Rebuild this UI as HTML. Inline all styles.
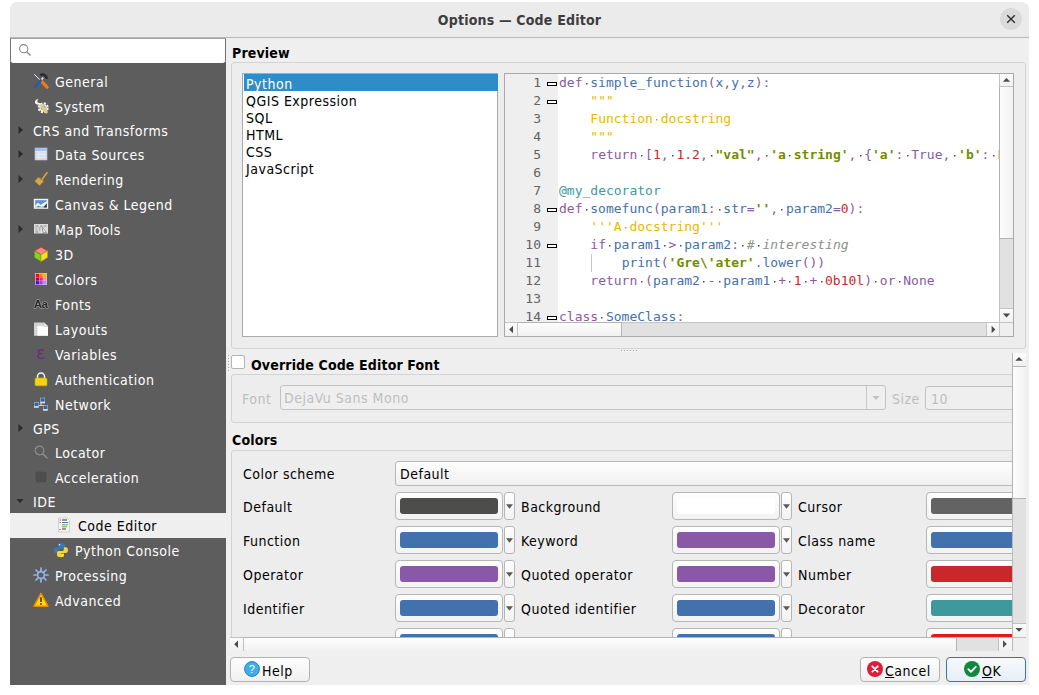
<!DOCTYPE html>
<html lang="en">
<head>
<meta charset="utf-8">
<title>Options — Code Editor</title>
<style>
*{box-sizing:border-box;margin:0;padding:0}
html,body{width:1039px;height:695px;overflow:hidden;background:#fff}
body{font-family:"DejaVu Sans Condensed","DejaVu Sans","Liberation Sans",sans-serif;font-size:14px;color:#000;letter-spacing:.5px;position:relative}
.abs,.win *{position:absolute}
.win{position:absolute;left:10px;top:2px;width:1019px;height:683px;background:#efefef;border-radius:8px 8px 0 0;overflow:hidden}
/* coordinates inside .win are page coords shifted by (-10,-2) */
.page{left:-10px;top:-2px;width:1039px;height:695px}
.titlebar{left:10px;top:2px;width:1019px;height:36px;background:#ebebeb;border-bottom:1px solid #b9b9b9}
.title{left:10px;top:3px;width:1019px;height:35px;line-height:35px;text-align:center;font-weight:bold;color:#3d3d3d;letter-spacing:.2px}
.close{left:1000px;top:8px;width:22px;height:22px;border-radius:50%;background:#dadada}
b,.b{font-weight:bold;letter-spacing:.15px}
.t{white-space:nowrap;line-height:16px;height:16px}
.side{left:10px;top:62px;width:216px;height:623px;background:#5d5d5d}
.search{left:10px;top:38px;width:216px;height:25px;background:#fff;border:1px solid #707070;border-top-color:#a3a3a3;border-bottom:0;border-radius:0 0 3px 3px}
.row{left:10px;width:216px;height:25px;line-height:25px;color:#fff;white-space:nowrap}
.row.sm{height:23px;line-height:23px}
.row span{top:1px}
u{position:static!important}
.row svg{top:4px}
.row.sel{background:#efefef;color:#000}
.gb{border:1px solid #d3d3d3;border-radius:3px;background:#ededed}
.frame{border:1px solid #a9a9a9;background:#fff}
.li{left:1px;width:254px;height:17px;line-height:20px;padding-left:2px;white-space:nowrap}
.code,.code *{font-family:"DejaVu Sans Mono","Liberation Mono",monospace;font-size:13px;letter-spacing:0}
.ln{left:0;width:36px;text-align:right;height:18px;line-height:18px;color:#636363}
.cl{left:54px;height:18px;line-height:18px;white-space:pre;color:#4d4d4c}
.cl span{position:static}
.fold{left:42px;width:10px;height:4px;border:1px solid #000;background:#fff}
.k{color:#8959a8}.f{color:#4271ae}.n{color:#c82829}.s{color:#718c00;font-weight:bold}.d{color:#eab700}.c{color:#8e908c;font-style:italic}.dc{color:#3e999f}.w{display:inline-block;width:1ch;height:18px;vertical-align:top;white-space:pre;background:linear-gradient(#4a4a4a,#4a4a4a) 3.300px 8.500px/1.500px 1.500px no-repeat}.wy{background-image:linear-gradient(#b89a30,#b89a30)}
.sbv{background:#e1e1e1;border-left:1px solid #c4c4c4}
.thumb{background:linear-gradient(90deg,#fdfdfd,#f1f1f1);border:1px solid #b4b4b4}
.thumbh{background:linear-gradient(180deg,#fdfdfd,#f1f1f1);border:1px solid #b4b4b4}
.sbb{background:linear-gradient(180deg,#fbfbfb,#f1f1f1)}
.sbbtn{background:linear-gradient(180deg,#fbfbfb,#f1f1f1);border:1px solid #c4c4c4}
.combo{border:1px solid #b6b6b6;border-radius:3px;background:linear-gradient(180deg,#fefefe,#f0f0f0)}
.cbtn{width:108px;height:28px;margin-top:-1px;border:1px solid #b6b6b6;border-radius:4px;background:linear-gradient(180deg,#fefefe,#f2f2f2)}
.cbtn i{left:4px;top:5px;width:98px;height:16px;border-radius:3px}
.marr{width:11px;height:28px;margin-top:-1px;border:1px solid #b6b6b6;border-radius:3px;background:linear-gradient(180deg,#fefefe,#f2f2f2)}
.marr svg{left:1px;top:11px}
.btn{height:25px;border:1px solid #b2b2b2;border-radius:4px;background:linear-gradient(180deg,#fefefe,#f0f0f0)}
.dis{color:#bebebe}
.dot{width:1px;height:1px;background:#a8a8a8;box-shadow:1px 1px 0 #fff}
</style>
</head>
<body>
<div class="win"><div class="page">

<!-- title bar -->
<div class="titlebar"></div>
<div class="title">Options — Code Editor</div>
<div class="close"><svg width="22" height="22" viewBox="0 0 22 22" style="left:0;top:0"><path d="M7.2 7.2l7.6 7.6M14.8 7.2l-7.6 7.6" stroke="#2e2e2e" stroke-width="1.4" fill="none"/></svg></div>

<!-- sidebar -->
<div class="side"></div>
<div class="search"><svg width="16" height="16" viewBox="0 0 16 16" style="left:6px;top:3px"><circle cx="6.700" cy="6.700" r="4.100" fill="none" stroke="#868686" stroke-width="1.100"/><path d="M9.800 9.800l3.700 3.700" stroke="#868686" stroke-width="1.400"/></svg></div>


<div class="row" style="top:69px"><svg width="16" height="16" viewBox="0 0 16 16" style="left:23px;top:4px"><path d="M1.300 1.300L7.800 7.600" stroke="#ececec" stroke-width="1"/><path d="M8.400 8.200l5.600 6" stroke="#ef7a16" stroke-width="3.200" stroke-linecap="round"/><path d="M7.200 2.400C9.400.6 13 1.600 14 5.800" fill="none" stroke="#2a2a2a" stroke-width="2.600"/><path d="M10.200 4.600L8.400 6.800" stroke="#e4e4e4" stroke-width="1.800"/><path d="M7.600 7.600L2.400 13.600" stroke="#2d5c9c" stroke-width="2.800" stroke-linecap="round"/></svg><span style="left:45px">General</span></div>
<div class="row" style="top:94px"><svg width="16" height="16" viewBox="0 0 16 16" style="left:23px;top:4px"><path d="M5.600 1.600A2.600 2.600 0 1 0 6.900 5.200L4.600 4.600 4.300 2.800z" fill="#f6f6f6"/><path d="M5.800 5.200l2.400 2.600" stroke="#f6f6f6" stroke-width="1.600"/><circle cx="10.200" cy="9.800" r="4.500" fill="none" stroke="#f4f4f4" stroke-width="2" stroke-dasharray="2.200 1.330"/><circle cx="10.200" cy="9.800" r="3.600" fill="#f4f4f4"/><circle cx="10.200" cy="9.800" r="2.500" fill="#7ea4d6"/><path d="M8.200 7.600l5.200 6.400" stroke="#e9d474" stroke-width="2.800" stroke-linecap="round"/><path d="M8.200 7.600l5.200 6.400" stroke="#c9b450" stroke-width=".5"/></svg><span style="left:45px">System</span></div>
<div class="row sm" style="top:119px"><svg width="8" height="10" viewBox="0 0 8 10" style="left:7px;top:6px"><path d="M1.500 1l4.500 4-4.500 4z" fill="#2b2b2b"/></svg><span style="left:23px">CRS and Transforms</span></div>
<div class="row" style="top:142px"><svg width="8" height="10" viewBox="0 0 8 10" style="left:7px;top:7px"><path d="M1.500 1l4.500 4-4.500 4z" fill="#2b2b2b"/></svg><svg width="16" height="16" viewBox="0 0 16 16" style="left:23px;top:4px"><rect x="2" y="2" width="12" height="12" fill="#d5dce8"/><rect x="2" y="2" width="12" height="3.400" fill="#9fc3ee"/><path d="M2 5.700h12M2 8.500h12M2 11.300h12M6 5.400v8.600" stroke="#eef2f8" stroke-width=".8"/><rect x="2" y="2" width="12" height="12" fill="none" stroke="#b9c6da" stroke-width=".6"/></svg><span style="left:45px">Data Sources</span></div>
<div class="row" style="top:167px"><svg width="8" height="10" viewBox="0 0 8 10" style="left:7px;top:7px"><path d="M1.500 1l4.500 4-4.500 4z" fill="#2b2b2b"/></svg><svg width="16" height="16" viewBox="0 0 16 16" style="left:23px;top:4px"><path d="M14 1.800L9.300 8" stroke="#dba33a" stroke-width="1.700" stroke-linecap="round"/><path d="M5.300 6.200l5.400 4-4.100 4.300-4.800-4.300z" fill="#d9a648" stroke="#b98225" stroke-width=".7"/></svg><span style="left:45px">Rendering</span></div>
<div class="row" style="top:192px"><svg width="16" height="16" viewBox="0 0 16 16" style="left:23px;top:4px"><rect x=".8" y="2.800" width="14.400" height="10" fill="#f4f4f4"/><rect x="2.200" y="4.200" width="11.600" height="7.200" fill="#5a93d2"/><path d="M2.200 9.500l2.800-3 2.600 2.400 2.400-1.600 3.800-2.300v3l-3 2.400-3 .4-2.400-1.400-3.200 2z" fill="#f4f6fa"/><path d="M13.800 7.200l-3.400 4.200h3.400z" fill="#3a3a3a"/></svg><span style="left:45px">Canvas &amp; Legend</span></div>
<div class="row" style="top:217px"><svg width="8" height="10" viewBox="0 0 8 10" style="left:7px;top:7px"><path d="M1.500 1l4.500 4-4.500 4z" fill="#2b2b2b"/></svg><svg width="16" height="16" viewBox="0 0 16 16" style="left:23px;top:4px"><rect x="1" y="3" width="14" height="9.500" fill="#dedede"/><path d="M2.500 5h3M7 5h2M10.500 5h3M2.500 7h1.500M5.500 7h2M2.500 9h2M6 9h1.500M2.500 11h3" stroke="#8c8c8c" stroke-width="1"/><path d="M9 5.500l4.500 6-2-.3-1 1.800z" fill="#f8f8f8" stroke="#666" stroke-width=".6"/></svg><span style="left:45px">Map Tools</span></div>
<div class="row" style="top:242px"><svg width="16" height="16" viewBox="0 0 16 16" style="left:23px;top:4px"><path d="M8 1l6.500 3.800L8 8.800 1.500 4.800z" fill="#f28a8a" stroke="#c23030" stroke-width=".8"/><path d="M1.500 4.800L8 8.800v6.700L1.500 11.500z" fill="#86d21e" stroke="#5c9a14" stroke-width=".8"/><path d="M14.500 4.800L8 8.800v6.700l6.500-4z" fill="#f6e02c" stroke="#b8a018" stroke-width=".8"/></svg><span style="left:45px">3D</span></div>
<div class="row" style="top:267px"><svg width="16" height="16" viewBox="0 0 16 16" style="left:23px;top:4px"><rect x="2" y="2" width="12" height="12" fill="#cfcfcf"/><rect x="2.700" y="2.700" width="3.300" height="3.300" fill="#ff0a0a"/><rect x="6.400" y="2.700" width="3.300" height="3.300" fill="#ff7e00"/><rect x="10.100" y="2.700" width="3.300" height="3.300" fill="#ffb400"/><rect x="2.700" y="6.400" width="3.300" height="3.300" fill="#b4003c"/><rect x="6.400" y="6.400" width="3.300" height="3.300" fill="#e61e9c"/><rect x="10.100" y="6.400" width="3.300" height="3.300" fill="#ff82c3"/><rect x="2.700" y="10.100" width="3.300" height="3.300" fill="#5a00ff"/><rect x="6.400" y="10.100" width="3.300" height="3.300" fill="#9440ff"/><rect x="10.100" y="10.100" width="3.300" height="3.300" fill="#b488ff"/></svg><span style="left:45px">Colors</span></div>
<div class="row" style="top:292px"><svg width="16" height="16" viewBox="0 0 16 16" style="left:23px;top:4px"><text x=".8" y="12.300" font-family="Liberation Sans,sans-serif" font-size="11.500" font-weight="bold" fill="#2a2a2a" stroke="#b4b4b4" stroke-width=".9" paint-order="stroke" letter-spacing="-.6">Aa</text></svg><span style="left:45px">Fonts</span></div>
<div class="row" style="top:317px"><svg width="16" height="16" viewBox="0 0 16 16" style="left:23px;top:4px"><path d="M1 1.500h10l4 4v9.200H1z" fill="#cfcfcf"/><path d="M4.300 4.800h10.700v9.900H4.300z" fill="#fdfdfd"/><path d="M11 1.500v4h4z" fill="#f6f6f6" stroke="#b8b8b8" stroke-width=".5"/><path d="M2.600 5.500v1M2.600 8v1M2.600 10.500v1M2.600 13v1M5 3h1M7.500 3h1" stroke="#f0f0f0" stroke-width=".9"/></svg><span style="left:45px">Layouts</span></div>
<div class="row" style="top:342px"><svg width="16" height="16" viewBox="0 0 16 16" style="left:23px;top:4px"><text x="3.200" y="13.200" font-family="DejaVu Sans,sans-serif" font-size="17" fill="#6d2c80">ε</text></svg><span style="left:45px">Variables</span></div>
<div class="row" style="top:367px"><svg width="16" height="16" viewBox="0 0 16 16" style="left:23px;top:4px"><path d="M4.500 7.500V5.500a3.500 3.500 0 0 1 7 0v2" fill="none" stroke="#f4f4f4" stroke-width="1.500"/><rect x="2" y="7" width="12" height="7.800" rx="1.200" fill="#f2d50c" stroke="#c9ae08" stroke-width=".6"/></svg><span style="left:45px">Authentication</span></div>
<div class="row" style="top:392px"><svg width="16" height="16" viewBox="0 0 16 16" style="left:23px;top:4px"><path d="M3.500 9.500h4.500v-3M8 9.500h3.500v2" stroke="#cfcfcf" stroke-width="1" fill="none"/><rect x="7.200" y="1.800" width="4.800" height="5.600" fill="#d8d8d8"/><rect x="7.600" y="2.200" width="4" height="3.400" fill="#2c64b4"/><rect x="1" y="6.200" width="4.800" height="5.600" fill="#d8d8d8"/><rect x="1.400" y="6.600" width="4" height="3.400" fill="#2c64b4"/><rect x="10" y="9.200" width="4.800" height="5.600" fill="#d8d8d8"/><rect x="10.400" y="9.600" width="4" height="3.400" fill="#2c64b4"/></svg><span style="left:45px">Network</span></div>
<div class="row sm" style="top:417px"><svg width="8" height="10" viewBox="0 0 8 10" style="left:7px;top:6px"><path d="M1.500 1l4.500 4-4.500 4z" fill="#2b2b2b"/></svg><span style="left:23px">GPS</span></div>
<div class="row" style="top:440px"><svg width="16" height="16" viewBox="0 0 16 16" style="left:23px;top:4px"><circle cx="6.500" cy="6.500" r="4.300" fill="none" stroke="#8e8e8e" stroke-width="1.200"/><path d="M9.700 9.700l4.300 4.300" stroke="#8e8e8e" stroke-width="1.500" stroke-linecap="round"/></svg><span style="left:45px">Locator</span></div>
<div class="row" style="top:465px"><svg width="16" height="16" viewBox="0 0 16 16" style="left:23px;top:4px"><rect x="3" y="3" width="10" height="10" fill="#4b4b4b"/><path d="M4.500 2v12M6.500 2v12M8.500 2v12M10.500 2v12M2 4.500h12M2 6.500h12M2 8.500h12M2 10.500h12" stroke="#4f4f4f" stroke-width=".9"/></svg><span style="left:45px">Acceleration</span></div>
<div class="row sm" style="top:490px"><svg width="10" height="8" viewBox="0 0 10 8" style="left:5px;top:7px"><path d="M1.500 2h7l-3.500 4.200z" fill="#2b2b2b"/></svg><span style="left:23px">IDE</span></div>
<div class="row sel" style="top:513px"><svg width="16" height="16" viewBox="0 0 16 16" style="left:46px;top:4px"><path d="M2.500 1h8.500l2.500 2.500v11.500h-11z" fill="#f4f4f4" stroke="#c4c4c4" stroke-width=".7"/><path d="M3.500 3h1.300M3.500 5.500h1.300M3.500 12.500h1.300" stroke="#d8402a" stroke-width="1"/><path d="M6 3h5" stroke="#3c3c3c" stroke-width="1"/><path d="M6 5.500h6" stroke="#4a7cc0" stroke-width="1"/><path d="M6 7.800h6M6 9.800h5" stroke="#6ab04a" stroke-width="1"/><path d="M6 12h4" stroke="#3c3c3c" stroke-width="1"/></svg><span style="left:68px">Code Editor</span></div>
<div class="row" style="top:538px"><svg width="16" height="16" viewBox="0 0 16 16" style="left:43px;top:4px"><path d="M7.800 1C5.600 1 5 2 5 3v1.700h3.200v.6H3.300C2 5.300 1 6.300 1 8.200s1 2.900 2.200 2.900H5V9.300C5 8 6 7.200 7.200 7.200h3.100c1 0 1.700-.8 1.700-1.700V3c0-1.200-1.300-2-4.200-2z" fill="#3b78b4"/><path d="M8.200 15.300c2.200 0 2.800-1 2.800-2v-1.700H7.800V11h4.900c1.300 0 2.300-1 2.300-2.900s-1-2.900-2.200-2.900H11V7c0 1.300-1 2.100-2.200 2.100H5.700C4.700 9.100 4 9.900 4 10.800v2.500c0 1.200 1.300 2 4.200 2z" fill="#fcd13e"/><circle cx="6.500" cy="2.700" r=".7" fill="#fff"/><circle cx="9.500" cy="13.600" r=".7" fill="#fff"/></svg><span style="left:65px">Python Console</span></div>
<div class="row" style="top:563px"><svg width="16" height="16" viewBox="0 0 16 16" style="left:23px;top:4px"><g stroke="#8fb6ea" stroke-width="1.700" stroke-linecap="round"><path d="M8 1v14M1 8h14M3 3l10 10M13 3L3 13"/></g><circle cx="8" cy="8" r="3.400" fill="#5d5d5d" stroke="#8fb6ea" stroke-width="1.600"/></svg><span style="left:45px">Processing</span></div>
<div class="row" style="top:588px"><svg width="16" height="16" viewBox="0 0 16 16" style="left:23px;top:4px"><path d="M8 1.300l7 12.900H1z" fill="#ffd91a" stroke="#f28a00" stroke-width="1.500" stroke-linejoin="round"/><path d="M8 5.300v4.700" stroke="#7a2a00" stroke-width="1.700"/><circle cx="8" cy="12" r=".95" fill="#7a2a00"/></svg><span style="left:45px">Advanced</span></div>


<div class="t b" style="left:232px;top:45px">Preview</div>
<div class="gb" style="left:231px;top:62px;width:795px;height:287px"></div>
<div class="frame" style="left:242px;top:73px;width:256px;height:264px">
<div class="li" style="top:0;background:#308cc6;color:#fff">Python</div>
<div class="li" style="top:17px">QGIS Expression</div>
<div class="li" style="top:34px">SQL</div>
<div class="li" style="top:51px">HTML</div>
<div class="li" style="top:68px">CSS</div>
<div class="li" style="top:85px">JavaScript</div>
</div>
<div class="frame code" style="left:504px;top:73px;width:510px;height:264px;overflow:hidden">
<div style="left:0;top:0;width:53px;height:248px;background:#efefef"></div>
<div style="left:0;top:0;width:494px;height:248px;overflow:hidden">
<div style="left:86px;top:180px;width:1px;height:18px;background:#c8c8c8"></div>
<div class="ln" style="top:0px">1</div>
<div class="fold" style="top:8px"></div>
<div class="cl" style="top:0px"><span class="k">def</span><span class="w"> </span><span class="f">simple_function</span><span class="k">(</span><span class="f">x</span><span class="k">,</span><span class="f">y</span><span class="k">,</span><span class="f">z</span><span class="k">):</span></div>
<div class="ln" style="top:18px">2</div>
<div class="fold" style="top:26px"></div>
<div class="cl" style="top:18px">    <span class="d">"""</span></div>
<div class="ln" style="top:36px">3</div>
<div class="cl" style="top:36px">    <span class="d">Function<span class="w wy"> </span>docstring</span></div>
<div class="ln" style="top:54px">4</div>
<div class="cl" style="top:54px">    <span class="d">"""</span></div>
<div class="ln" style="top:72px">5</div>
<div class="cl" style="top:72px">    <span class="k">return</span><span class="w"> </span><span class="k">[</span><span class="n">1</span><span class="k">,</span><span class="w"> </span><span class="n">1.2</span><span class="k">,</span><span class="w"> </span><span class="s">"val"</span><span class="k">,</span><span class="w"> </span><span class="s">'a</span><span class="w"> </span><span class="s">string'</span><span class="k">,</span><span class="w"> </span><span class="k">{</span><span class="s">'a'</span><span class="k">:</span><span class="w"> </span><span class="k">True,</span><span class="w"> </span><span class="s">'b'</span><span class="k">:</span><span class="w"> </span><span class="k">False}]</span></div>
<div class="ln" style="top:90px">6</div>
<div class="cl" style="top:90px"></div>
<div class="ln" style="top:108px">7</div>
<div class="cl" style="top:108px"><span class="dc">@my_decorator</span></div>
<div class="ln" style="top:126px">8</div>
<div class="fold" style="top:134px"></div>
<div class="cl" style="top:126px"><span class="k">def</span><span class="w"> </span><span class="f">somefunc</span><span class="k">(</span><span class="f">param1</span><span class="k">:</span><span class="w"> </span><span class="f">str</span><span class="k">=</span><span class="s">''</span><span class="k">,</span><span class="w"> </span><span class="f">param2</span><span class="k">=</span><span class="n">0</span><span class="k">):</span></div>
<div class="ln" style="top:144px">9</div>
<div class="cl" style="top:144px">    <span class="d">'''A<span class="w wy"> </span>docstring'''</span></div>
<div class="ln" style="top:162px">10</div>
<div class="fold" style="top:170px"></div>
<div class="cl" style="top:162px">    <span class="k">if</span><span class="w"> </span><span class="f">param1</span><span class="w"> </span><span class="k">&gt;</span><span class="w"> </span><span class="f">param2</span><span class="k">:</span><span class="w"> </span><span class="c">#</span><span class="w"> </span><span class="c">interesting</span></div>
<div class="ln" style="top:180px">11</div>
<div class="cl" style="top:180px">        <span class="f">print</span><span class="k">(</span><span class="s">'Gre\'ater'</span><span class="k">.</span><span class="f">lower</span><span class="k">())</span></div>
<div class="ln" style="top:198px">12</div>
<div class="cl" style="top:198px">    <span class="k">return</span><span class="w"> </span><span class="k">(</span><span class="f">param2</span><span class="w"> </span><span class="k">-</span><span class="w"> </span><span class="f">param1</span><span class="w"> </span><span class="k">+</span><span class="w"> </span><span class="n">1</span><span class="w"> </span><span class="k">+</span><span class="w"> </span><span class="n">0b10l</span><span class="k">)</span><span class="w"> </span><span class="k">or</span><span class="w"> </span><span class="k">None</span></div>
<div class="ln" style="top:216px">13</div>
<div class="cl" style="top:216px"></div>
<div class="ln" style="top:234px">14</div>
<div class="fold" style="top:242px"></div>
<div class="cl" style="top:234px"><span class="k">class</span><span class="w"> </span><span class="f">SomeClass</span><span class="k">:</span></div>
</div>
<!-- vertical scrollbar -->
<div class="sbv" style="left:494px;top:0;width:14px;height:248px"></div>
<div class="thumb" style="left:494px;top:12px;width:15px;height:153px"></div>
<div class="sbbtn" style="left:494px;top:-1px;width:15px;height:14px"><svg width="13" height="12" viewBox="0 0 13 12" style="left:0;top:0"><path d="M2.800 7.800l3.700-3.800 3.700 3.800z" fill="#4a4a4a"/></svg></div>
<div class="sbbtn" style="left:494px;top:234px;width:15px;height:15px"><svg width="13" height="13" viewBox="0 0 13 13" style="left:0;top:0"><path d="M2.800 4.600l3.700 3.800 3.700-3.800z" fill="#4a4a4a"/></svg></div>
<!-- horizontal scrollbar -->
<div style="left:0;top:248px;width:494px;height:14px;background:#e1e1e1;border-top:1px solid #c4c4c4"></div>
<div class="thumbh" style="left:12px;top:248px;width:105px;height:15px"></div>
<div class="sbbtn" style="left:-1px;top:248px;width:14px;height:15px"><svg width="12" height="13" viewBox="0 0 12 13" style="left:0;top:0"><path d="M8 2.800l-3.800 3.700 3.800 3.700z" fill="#4a4a4a"/></svg></div>
<div class="sbbtn" style="left:481px;top:248px;width:14px;height:15px"><svg width="12" height="13" viewBox="0 0 12 13" style="left:0;top:0"><path d="M4.600 2.800l3.800 3.700-3.800 3.700z" fill="#4a4a4a"/></svg></div>
<div style="left:494px;top:248px;width:15px;height:15px;background:#efefef;border:1px solid #c4c4c4"></div>
</div>



<div class="dot" style="left:621px;top:350px"></div><div class="dot" style="left:624px;top:350px"></div><div class="dot" style="left:627px;top:350px"></div><div class="dot" style="left:630px;top:350px"></div><div class="dot" style="left:633px;top:350px"></div><div class="dot" style="left:636px;top:350px"></div><div class="dot" style="left:228px;top:355px"></div><div class="dot" style="left:228px;top:358px"></div><div class="dot" style="left:228px;top:361px"></div><div class="dot" style="left:228px;top:364px"></div><div class="dot" style="left:228px;top:367px"></div><div class="dot" style="left:228px;top:370px"></div>
<!-- scroll area viewport: x 230..1012, y 353..637 -->
<div style="left:230px;top:350px;width:782px;height:287px;overflow:hidden"><div style="left:-230px;top:-350px;width:1039px;height:695px">
<div style="left:231px;top:355px;width:14px;height:14px;background:#fff;border:1px solid #b4b4b4;border-radius:2px"></div>
<div class="t b" style="left:251px;top:357px">Override Code Editor Font</div>
<div class="gb" style="left:231px;top:374px;width:900px;height:49px"></div>
<div class="t dis" style="left:242px;top:391px">Font</div>
<div class="combo" style="left:280px;top:385px;width:606px;height:25px;background:#efefef;border-color:#c2c2c2"></div>
<div style="left:866px;top:386px;width:1px;height:23px;background:#c9c9c9"></div>
<svg width="10" height="6" viewBox="0 0 10 6" style="left:871px;top:395px"><path d="M1.500 1h7l-3.500 4z" fill="#c0c0c0"/></svg>
<div class="t dis" style="left:284px;top:390px">DejaVu Sans Mono</div>
<div class="t dis" style="left:892px;top:391px">Size</div>
<div class="combo" style="left:925px;top:386px;width:120px;height:24px;background:#efefef;border-color:#c2c2c2"></div>
<div class="t dis" style="left:931px;top:391px">10</div>
<div class="t b" style="left:232px;top:432px">Colors</div>
<div class="gb" style="left:231px;top:450px;width:900px;height:300px"></div>
<div class="t" style="left:243px;top:466px">Color scheme</div>
<div class="combo" style="left:395px;top:461px;width:700px;height:25px"></div>
<div class="t" style="left:400px;top:466px">Default</div>
<div class="t" style="left:243px;top:499px">Default</div>
<div class="cbtn" style="left:395px;top:493px"><i style="background:#4d4d4c"></i></div>
<div class="marr" style="left:504px;top:493px"><svg width="7" height="5" viewBox="0 0 7 5"><path d="M0 .3h7l-3.500 4.400z" fill="#595959"/></svg></div>
<div class="t" style="left:521px;top:499px">Background</div>
<div class="cbtn" style="left:672px;top:493px"><i style="background:#ffffff"></i></div>
<div class="marr" style="left:781px;top:493px"><svg width="7" height="5" viewBox="0 0 7 5"><path d="M0 .3h7l-3.500 4.400z" fill="#595959"/></svg></div>
<div class="t" style="left:798px;top:499px">Cursor</div>
<div class="cbtn" style="left:926px;top:493px"><i style="background:#636363"></i></div>
<div class="marr" style="left:1035px;top:493px"><svg width="7" height="5" viewBox="0 0 7 5"><path d="M0 .3h7l-3.500 4.400z" fill="#595959"/></svg></div>
<div class="t" style="left:243px;top:533px">Function</div>
<div class="cbtn" style="left:395px;top:527px"><i style="background:#4271ae"></i></div>
<div class="marr" style="left:504px;top:527px"><svg width="7" height="5" viewBox="0 0 7 5"><path d="M0 .3h7l-3.500 4.400z" fill="#595959"/></svg></div>
<div class="t" style="left:521px;top:533px">Keyword</div>
<div class="cbtn" style="left:672px;top:527px"><i style="background:#8959a8"></i></div>
<div class="marr" style="left:781px;top:527px"><svg width="7" height="5" viewBox="0 0 7 5"><path d="M0 .3h7l-3.500 4.400z" fill="#595959"/></svg></div>
<div class="t" style="left:798px;top:533px">Class name</div>
<div class="cbtn" style="left:926px;top:527px"><i style="background:#4271ae"></i></div>
<div class="marr" style="left:1035px;top:527px"><svg width="7" height="5" viewBox="0 0 7 5"><path d="M0 .3h7l-3.500 4.400z" fill="#595959"/></svg></div>
<div class="t" style="left:243px;top:567px">Operator</div>
<div class="cbtn" style="left:395px;top:561px"><i style="background:#8959a8"></i></div>
<div class="marr" style="left:504px;top:561px"><svg width="7" height="5" viewBox="0 0 7 5"><path d="M0 .3h7l-3.500 4.400z" fill="#595959"/></svg></div>
<div class="t" style="left:521px;top:567px">Quoted operator</div>
<div class="cbtn" style="left:672px;top:561px"><i style="background:#8959a8"></i></div>
<div class="marr" style="left:781px;top:561px"><svg width="7" height="5" viewBox="0 0 7 5"><path d="M0 .3h7l-3.500 4.400z" fill="#595959"/></svg></div>
<div class="t" style="left:798px;top:567px">Number</div>
<div class="cbtn" style="left:926px;top:561px"><i style="background:#c82829"></i></div>
<div class="marr" style="left:1035px;top:561px"><svg width="7" height="5" viewBox="0 0 7 5"><path d="M0 .3h7l-3.500 4.400z" fill="#595959"/></svg></div>
<div class="t" style="left:243px;top:601px">Identifier</div>
<div class="cbtn" style="left:395px;top:595px"><i style="background:#4271ae"></i></div>
<div class="marr" style="left:504px;top:595px"><svg width="7" height="5" viewBox="0 0 7 5"><path d="M0 .3h7l-3.500 4.400z" fill="#595959"/></svg></div>
<div class="t" style="left:521px;top:601px">Quoted identifier</div>
<div class="cbtn" style="left:672px;top:595px"><i style="background:#4271ae"></i></div>
<div class="marr" style="left:781px;top:595px"><svg width="7" height="5" viewBox="0 0 7 5"><path d="M0 .3h7l-3.500 4.400z" fill="#595959"/></svg></div>
<div class="t" style="left:798px;top:601px">Decorator</div>
<div class="cbtn" style="left:926px;top:595px"><i style="background:#3e999f"></i></div>
<div class="marr" style="left:1035px;top:595px"><svg width="7" height="5" viewBox="0 0 7 5"><path d="M0 .3h7l-3.500 4.400z" fill="#595959"/></svg></div>
<div class="t" style="left:243px;top:635px">Comment</div>
<div class="cbtn" style="left:395px;top:629px"><i style="background:#4271ae"></i></div>
<div class="marr" style="left:504px;top:629px"><svg width="7" height="5" viewBox="0 0 7 5"><path d="M0 .3h7l-3.500 4.400z" fill="#595959"/></svg></div>
<div class="t" style="left:521px;top:635px">Tag</div>
<div class="cbtn" style="left:672px;top:629px"><i style="background:#4271ae"></i></div>
<div class="marr" style="left:781px;top:629px"><svg width="7" height="5" viewBox="0 0 7 5"><path d="M0 .3h7l-3.500 4.400z" fill="#595959"/></svg></div>
<div class="t" style="left:798px;top:635px">Error</div>
<div class="cbtn" style="left:926px;top:629px"><i style="background:#e31a1c"></i></div>
<div class="marr" style="left:1035px;top:629px"><svg width="7" height="5" viewBox="0 0 7 5"><path d="M0 .3h7l-3.500 4.400z" fill="#595959"/></svg></div>
</div></div>
<!-- vertical scrollbar of scroll area -->
<div class="sbv" style="left:1012px;top:353px;width:14px;height:298px;border-left-color:#b9b9b9"></div>
<div class="thumb" style="left:1012px;top:366px;width:14px;height:133px;border-right:0"></div>
<div class="sbb" style="left:1013px;top:353px;width:13px;height:13px"><svg width="13" height="13" viewBox="0 0 13 13" style="left:0;top:0"><path d="M2.300 7.800l3.700-3.800 3.700 3.800z" fill="#4a4a4a"/></svg></div>
<div class="sbb" style="left:1013px;top:623px;width:13px;height:15px;border-top:1px solid #c0c0c0;border-bottom:1px solid #c0c0c0"><svg width="13" height="13" viewBox="0 0 13 13" style="left:0;top:0"><path d="M2.300 4l3.700 3.800 3.700-3.800z" fill="#505050"/></svg></div>
<div style="left:1013px;top:638px;width:13px;height:13px;background:#efefef"></div>
<!-- horizontal scrollbar -->
<div style="left:230px;top:637px;width:782px;height:14px;background:#e1e1e1;border-top:1px solid #c0c0c0"></div>
<div class="thumbh" style="left:243px;top:637px;width:714px;height:14px;border-bottom:0"></div>
<div class="sbb" style="left:230px;top:638px;width:14px;height:13px;border-right:1px solid #c0c0c0"><svg width="13" height="13" viewBox="0 0 13 13" style="left:0;top:0"><path d="M8 2.500l-3.800 3.800 3.800 3.800z" fill="#4a4a4a"/></svg></div>
<div class="sbb" style="left:998px;top:638px;width:14px;height:13px;border-left:1px solid #c0c0c0"><svg width="13" height="13" viewBox="0 0 13 13" style="left:0;top:0"><path d="M4 2.200l3.800 3.800-3.800 3.800z" fill="#505050"/></svg></div>



<div class="btn" style="left:230px;top:657px;width:80px"></div>
<svg width="16" height="16" viewBox="0 0 16 16" style="left:244px;top:661px"><circle cx="8" cy="8" r="7.400" fill="#3daee9" stroke="#2a7fb0" stroke-width="1"/><text x="8" y="12" text-anchor="middle" font-family="Liberation Sans,sans-serif" font-size="11" fill="#fff">?</text></svg>
<div class="t" style="left:262px;top:663px">Help</div>
<div class="btn" style="left:860px;top:657px;width:80px"></div>
<svg width="16" height="16" viewBox="0 0 16 16" style="left:867px;top:661px"><circle cx="8" cy="8" r="8" fill="#da1e3c"/><path d="M5.300 5.300l5.400 5.400M10.700 5.300l-5.400 5.400" stroke="#fff" stroke-width="1.800" stroke-linecap="round"/></svg>
<div class="t" style="left:885px;top:663px"><u>C</u>ancel</div>
<div class="btn" style="left:946px;top:657px;width:80px;border-color:#3a76ad;background:linear-gradient(180deg,#f7fafd,#e6eef6)"></div>
<svg width="16" height="16" viewBox="0 0 16 16" style="left:964px;top:661px"><circle cx="8" cy="8" r="8" fill="#10893e"/><path d="M4.300 8.200l2.600 2.600 4.900-5" stroke="#fff" stroke-width="1.800" fill="none" stroke-linecap="round" stroke-linejoin="round"/></svg>
<div class="t" style="left:982px;top:663px"><u>O</u>K</div>


</div></div>
</body>
</html>
